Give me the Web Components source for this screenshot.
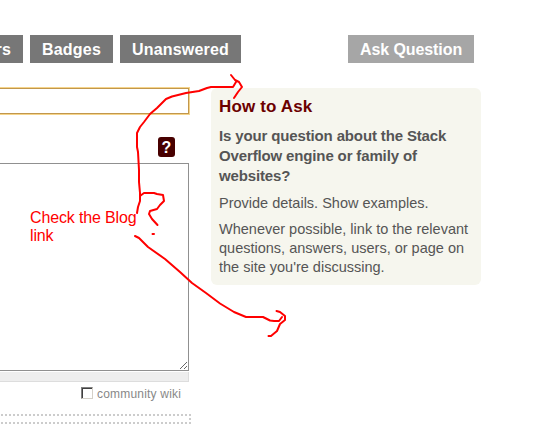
<!DOCTYPE html>
<html lang="en">
<head>
<meta charset="utf-8">
<title>Ask Question</title>
<style>
html, body { margin: 0; width: 546px; height: 429px; overflow: hidden; background: #fff; font-family: "Liberation Sans", Arial, sans-serif; }
</style>
</head>
<body>
<ask-page></ask-page>
<script>
const define = (name, html) => {
  const t = document.createElement('template');
  t.innerHTML = html;
  customElements.define(name, class extends HTMLElement {
    constructor() {
      super();
      this.attachShadow({ mode: 'open' }).append(t.content.cloneNode(true));
    }
  });
};

define('nav-tab', `<style>
:host { display: flex; justify-content: center; box-sizing: border-box; height: 28px; width: var(--w); background: #777; color: #fff; font-weight: bold; font-size: 16px; line-height: 30px; letter-spacing: .2px; white-space: nowrap; }
:host([muted]) { background: #a6a6a6; letter-spacing: -.08px; }
:host([clipped]) { justify-content: flex-end; padding-right: 12px; overflow: hidden; }
</style><slot></slot>`);

define('title-field', `<style>
:host { display: block; box-sizing: border-box; height: 28px; border: solid #f5d48a; border-width: 1px 1px 1px 0; }
div { box-sizing: border-box; height: 100%; border: solid #c2974c; border-width: 1px 1px 1px 0; background: #fff; }
</style><div></div>`);

define('help-badge', `<style>
:host { display: block; width: 17px; height: 20px; border-radius: 3px; background: #480000; color: #fff; font-weight: bold; font-size: 16px; line-height: 22px; text-align: center; }
</style><slot></slot>`);

define('editor-box', `<style>
:host { display: block; }
.area { display: flex; justify-content: flex-end; align-items: flex-end; box-sizing: border-box; height: 208px; border: solid #909090; border-width: 1px 1px 1px 0; }
.bar { margin-top: 1px; box-sizing: border-box; height: 10px; background: #eee; border: solid #ddd; border-width: 0 1px 1px 0; }
svg { display: block; }
</style>
<div class="area"><svg width="9" height="9" viewBox="0 0 9 9" shape-rendering="crispEdges"><path d="M1 7h1v-1h1v-1h1v-1h1v-1h1v-1h1v-1h1v1h-1v1h-1v1h-1v1h-1v1h-1v1h-1v1h-1zM5 7h1v-1h1v-1h1v1h-1v1h-1v1h-1z" fill="#666"/></svg></div>
<div class="bar"></div>`);

define('wiki-check', `<style>
:host { display: flex; justify-content: flex-end; gap: 4px; height: 13px; color: #888; font-size: 12px; line-height: 15px; }
i { box-sizing: border-box; width: 12px; height: 12px; border: 1px solid; border-color: #808080 #d4d0c8 #d4d0c8 #808080; box-shadow: inset 1px 1px #404040; }
span { width: 84px; letter-spacing: .2px; white-space: nowrap; }
</style><i></i><span><slot></slot></span>`);

define('dotted-box', `<style>
:host { display: block; height: 10px; background:
 repeating-linear-gradient(90deg, transparent 0 1px, #ccc 1px 3px, transparent 3px 4px) 0 0 / 100% 2px no-repeat,
 repeating-linear-gradient(90deg, transparent 0 1px, #ccc 1px 3px, transparent 3px 4px) 0 8px / 100% 2px no-repeat,
 linear-gradient(#ccc, #ccc) 189px 4px / 2px 2px no-repeat; }
</style>`);

define('how-to', `<style>
:host { display: block; box-sizing: border-box; width: 270px; height: 197px; padding: 9px 8px; border-radius: 6px; background: #f6f6ee; color: #555; font-size: 14.5px; white-space: nowrap; }
h2 { margin: 0 0 9px; font-size: 17px; line-height: 20px; color: #6b0000; letter-spacing: .15px; }
p { margin: 0 0 7px; line-height: 19px; }
p.b { margin-bottom: 8px; font-size: 15px; font-weight: bold; line-height: 20px; letter-spacing: -.14px; }
</style><h2>How to Ask</h2>
<p class="b">Is your question about the Stack<br>Overflow engine or family of<br>websites?</p>
<p>Provide details. Show examples.</p>
<p>Whenever possible, link to the relevant<br>questions, answers, users, or page on<br>the site you're discussing.</p>`);

define('red-notes', `<style>
:host { position: absolute; inset: 0; color: #f00; pointer-events: none; }
svg { position: absolute; inset: 0; }
div { position: absolute; left: 30px; top: 209px; font-size: 16px; line-height: 18px; letter-spacing: -.14px; white-space: nowrap; }
</style>
<svg width="546" height="429" fill="none" stroke="#f00" stroke-width="2" stroke-linejoin="round" stroke-linecap="round">
<path d="M137 213L138 207L140 201V193L139 182V170L138 152L137 147V133L140 127L144 122L150 114L157 108L166 99L172 96.500L186 93L199 91L207 88L211 87H233L236 82M231 75L235 80L239 82L242 87L238 92L234 98"/>
<path d="M140 196L144 193H154L157 194L163 195L164 201L160 205L157 209L150 211L149 214L152 219L157.500 225M152.500 234H154"/>
<path d="M135 236L139 238L148 247L165 259L180 272L192 283L206 293L220 303.500L234 312L246 317H263L270 320.500L274 321H279L282 317M276.500 311L280 312L285 316V320L280 324L277 331L271 336H268.500"/>
</svg>
<div>Check the Blog<br>link</div>`);

define('ask-page', `<style>
:host { position: relative; display: block; width: 546px; height: 429px; overflow: hidden; }
nav { display: flex; gap: 7px; padding-top: 35px; width: 474px; }
nav :last-child { margin-left: auto; }
main { display: grid; grid-template-columns: 191px 270px; column-gap: 20px; padding-top: 25px; }
.form { display: flex; flex-direction: column; }
title-field { width: 190px; margin-top: -1px; }
help-badge { margin: 22px 0 6px 158px; }
editor-box { width: 189px; }
wiki-check { width: 181px; margin-top: 5px; }
dotted-box { margin-top: 14px; }
</style>
<nav><nav-tab clipped style="--w:23px">Users</nav-tab><nav-tab style="--w:83px">Badges</nav-tab><nav-tab style="--w:121px">Unanswered</nav-tab><nav-tab muted style="--w:126px">Ask Question</nav-tab></nav>
<main><div class="form"><title-field></title-field><help-badge>?</help-badge><editor-box></editor-box><wiki-check>community wiki</wiki-check><dotted-box></dotted-box></div><how-to></how-to></main>
<red-notes></red-notes>`);
</script>
</body>
</html>
